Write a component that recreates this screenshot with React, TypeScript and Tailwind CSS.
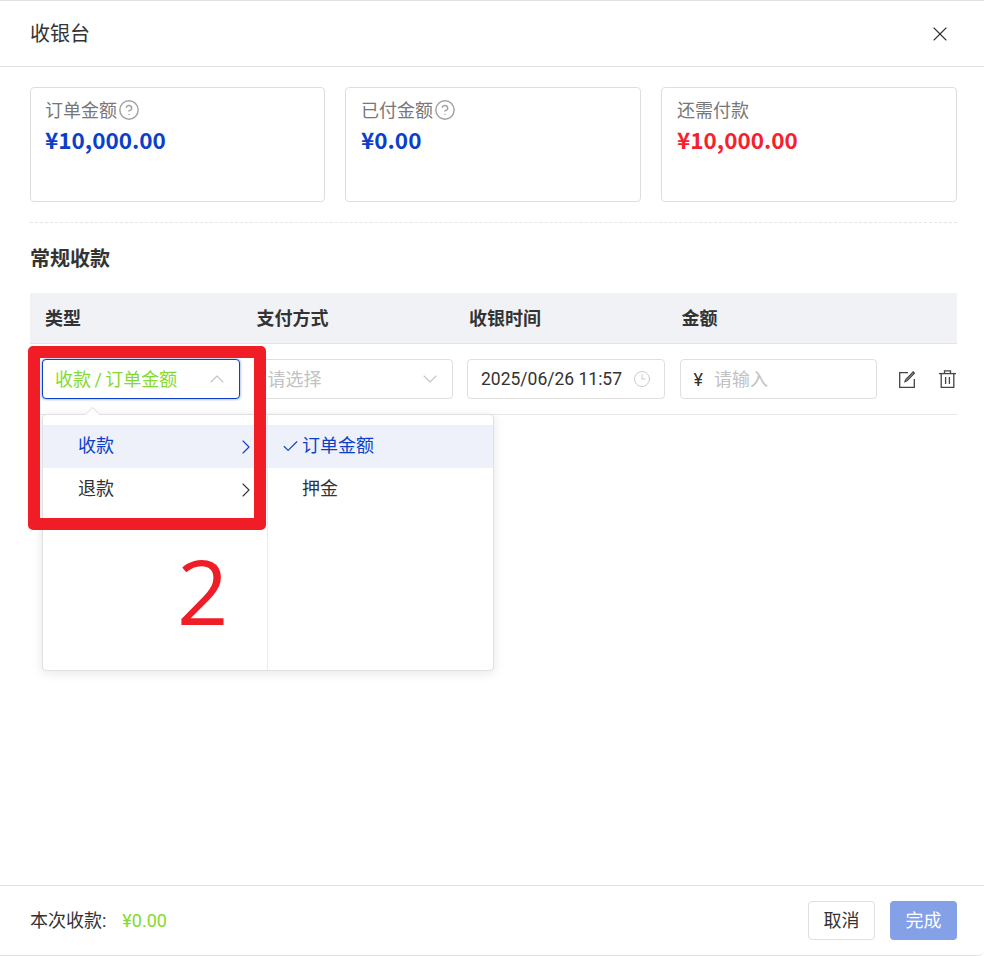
import { ChevronDown, ChevronRight, ChevronUp, Check, X, Clock3, CircleHelp } from 'lucide-react'

const font = "font-['Roboto','Noto_Sans_CJK_SC',sans-serif]"

function StatCard({ label, value, help, red, className }: { label: string; value: string; help?: boolean; red?: boolean; className: string }) {
	return (
		<div className={`h-[115px] rounded-[4px] border border-[#dedede] bg-white pt-[10px] ${className}`}>
			<div className="flex h-[24px] items-center gap-[1px] text-[18px] text-[#777777]">
				{label}
				{help && <CircleHelp className="h-[22px] w-[22px] text-[#a3a3a3]" strokeWidth={1.6} />}
			</div>
			<div className={`font-['Noto_Sans_CJK_SC',sans-serif] mt-[1px] text-[22.5px] leading-[32px] font-bold ${red ? 'text-[#f5222d]' : 'text-[#0b3fc9]'}`}>
				{value}
			</div>
		</div>
	)
}

function Field({ children, className }: { children: React.ReactNode; className?: string }) {
	return (
		<div className={`flex h-[40px] items-center rounded-[4px] border bg-white text-[18px] ${className ?? ''}`}>
			{children}
		</div>
	)
}

function EditIcon() {
	return (
		<svg className="h-[17px] w-[16px] text-[#444444]" viewBox="0 0 16 17" fill="none" stroke="currentColor" strokeWidth="1.3">
			<path d="M9 1.6H.7v14.7h14.6V8" />
			<path d="M14.2 1 15.4 2.2 8 9.8 6 10.6 6.8 8.5Z" />
		</svg>
	)
}

function TrashIcon() {
	return (
		<svg className="h-[18px] w-[17px] text-[#444444]" viewBox="0 0 17 18" fill="none" stroke="currentColor" strokeWidth="1.3">
			<path d="M0 3.6h17" />
			<path d="M5.5 3.6V.8h6v2.8" />
			<path d="M2.2 3.6v13.7h12.6V3.6" />
			<path d="M6.6 7v7M10.4 7v7" />
		</svg>
	)
}

export default function App() {
	return (
		<div className={`${font} relative h-[956px] w-[984px] overflow-hidden rounded-br-[6px] border-t border-b border-[#e2e2e2] bg-white text-[#333333]`}>
			<div className="flex h-[66px] items-center justify-between border-b border-[#e2e2e2] pr-[32px] pl-[30px] text-[20px]">
				<span>收银台</span>
				<X className="h-[24px] w-[24px] text-[#333333]" strokeWidth={1.1} />
			</div>

			<div className="pt-[20px] pr-[27px] pl-[30px]">
				<div className="grid grid-cols-[295px_296px_296px] gap-[20px]">
					<StatCard className="pl-[14px]" label="订单金额" value="¥10,000.00" help />
					<StatCard className="pl-[15px]" label="已付金额" value="¥0.00" help />
					<StatCard className="pl-[15px]" label="还需付款" value="¥10,000.00" red />
				</div>
				<div className="mt-[20px] border-t border-dashed border-[#e6e6e6]" />
				<h2 className="mt-[22px] text-[20px] leading-[29px] font-bold text-[#333333]">常规收款</h2>

				<div className="mt-[19px] grid h-[51px] grid-cols-[212.5px_212.5px_212.5px_212.5px_1fr] items-center border-b border-[#e2e4e9] bg-[#f1f2f6] text-[18px] font-bold">
					<div className="pl-[15px]">类型</div>
					<div className="pl-[14px]">支付方式</div>
					<div className="pl-[14px]">收银时间</div>
					<div className="pl-[14px]">金额</div>
					<div />
				</div>

				<div className="grid h-[71px] grid-cols-[212.5px_212.5px_212.5px_212.5px_1fr] items-center border-b border-[#e8e8e8]">
					<div className="pl-[12px]">
						<Field className="w-[198px] justify-between border-[#0b3fc9] pr-[10px] pl-[12px] text-[#85d92f] shadow-[0_0_3px_rgba(11,63,201,0.6)]">
							<span className="[word-spacing:-1px]">收款 / 订单金额</span>
							<ChevronUp className="h-[24px] w-[24px] text-[#c4c4c4]" strokeWidth={1.1} />
						</Field>
					</div>
					<div className="pl-[12px]">
						<Field className="w-[198px] justify-between border-[#dfdfdf] pr-[10px] pl-[12px] text-[#c2c2c2]">
							<span>请选择</span>
							<ChevronDown className="h-[24px] w-[24px] text-[#c4c4c4]" strokeWidth={1.1} />
						</Field>
					</div>
					<div className="pl-[12px]">
						<Field className="w-[198px] justify-between border-[#dfdfdf] pr-[13px] pl-[13px] text-[#333333]">
							<span className="text-[17.5px]">2025/06/26 11:57</span>
							<Clock3 className="h-[18px] w-[18px] text-[#c4c4c4]" strokeWidth={1.2} />
						</Field>
					</div>
					<div className="pl-[12px]">
						<Field className="w-[197px] border-[#dfdfdf] pl-[13px]">
							<span className="text-[#333333]">¥</span>
							<span className="ml-[11px] text-[#c2c2c2]">请输入</span>
						</Field>
					</div>
					<div className="flex items-center gap-[24px] pl-[19px]">
						<EditIcon />
						<TrashIcon />
					</div>
				</div>
			</div>

			{/* cascader dropdown */}
			<div className="absolute top-[413px] left-[42px] flex h-[257px] w-[452px] rounded-[4px] border border-[#e0e0e0] bg-white text-[18px] shadow-[0_2px_12px_rgba(0,0,0,0.1)]">
				<div className="absolute -top-[6px] left-[44px] h-[11px] w-[11px] rotate-45 border-t border-l border-[#e4e4e4] bg-white" />
				<div className="relative w-[225px] border-r border-[#eaeaea] pt-[10px]">
					<div className="flex h-[43px] items-center justify-between bg-[#eef1fa] pr-[9px] pl-[35px] text-[#0b3fc9]">
						<span className="mb-[2px]">收款</span>
						<ChevronRight className="h-[24px] w-[24px]" strokeWidth={1.1} />
					</div>
					<div className="flex h-[43px] items-center justify-between pr-[9px] pl-[35px]">
						<span className="mb-[2px]">退款</span>
						<ChevronRight className="h-[24px] w-[24px]" strokeWidth={1.1} />
					</div>
				</div>
				<div className="relative flex-1 pt-[10px]">
					<div className="flex h-[43px] items-center bg-[#eef1fa] pl-[13px] text-[#0b3fc9]">
						<Check className="h-[19px] w-[19px]" strokeWidth={1.4} />
						<span className="mb-[2px] ml-[2px]">订单金额</span>
					</div>
					<div className="flex h-[43px] items-center pl-[34px]">
						<span className="mb-[2px]">押金</span>
					</div>
				</div>
			</div>

			{/* red annotation */}
			<div className="absolute top-[345px] left-[28px] h-[184px] w-[238px] rounded-[5px] border-[12px] border-[#f01d27]" />
			<div className="absolute top-[527px] left-[177px] font-['Open_Sans',sans-serif] text-[90px] leading-[125px] text-[#f01d27]">2</div>

			<div className="absolute right-0 bottom-0 left-0 flex h-[70px] items-center justify-between border-t border-[#e2e2e2] bg-white pr-[27px] pl-[30px]">
				<div className="flex items-center text-[18px]">
					<span>本次收款:</span>
					<span className="ml-[16px] text-[#85d92f]">¥0.00</span>
				</div>
				<div className="flex gap-[15px]">
					<div className="flex h-[39px] w-[67px] items-center justify-center rounded-[4px] border border-[#dfdfdf] bg-white text-[18px]">取消</div>
					<div className="flex h-[39px] w-[67px] items-center justify-center rounded-[4px] bg-[#84a0e6] text-[18px] text-white">完成</div>
				</div>
			</div>
		</div>
	)
}
